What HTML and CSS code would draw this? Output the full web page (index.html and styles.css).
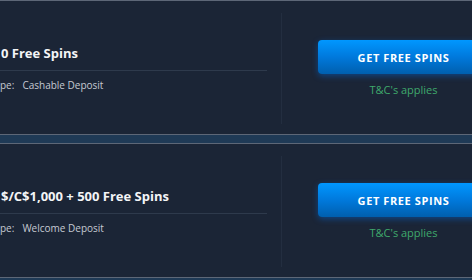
FILE: index.html
```html
<!DOCTYPE html>
<html>
<head>
<meta charset="utf-8">
<link rel="stylesheet" href="styles.css">
</head>
<body>
<div class="list">
  <div class="card">
    <div class="info">
      <div class="title">0 Free Spins</div>
      <div class="rule"></div>
      <div class="type"><span class="label">pe:</span><span class="value">Cashable Deposit</span></div>
    </div>
    <div class="vdiv"></div>
    <div class="cta">
      <a class="btn">GET FREE SPINS</a>
      <div class="tc">T&amp;C's applies</div>
    </div>
  </div>
  <div class="card">
    <div class="info">
      <div class="title">$/C$1,000 + 500 Free Spins</div>
      <div class="rule"></div>
      <div class="type"><span class="label">pe:</span><span class="value">Welcome Deposit</span></div>
    </div>
    <div class="vdiv"></div>
    <div class="cta">
      <a class="btn">GET FREE SPINS</a>
      <div class="tc">T&amp;C's applies</div>
    </div>
  </div>
</div>
</body>
</html>
```

FILE: styles.css
```css
html, body {
  margin: 0;
  padding: 0;
  background: #1f3a56;
  overflow: hidden;
  font-family: "Open Sans", "DejaVu Sans", sans-serif;
}
.list {
  display: flex;
  flex-direction: column;
  gap: 8px;
  margin: 0 -40px 0 -20px;
}
.card {
  box-sizing: border-box;
  height: 135px;
  background: #1b2536;
  border: 1px solid #5d6777;
  border-radius: 4px;
  display: flex;
  align-items: center;
  padding: 12px 0 10px 19px;
}
.info {
  width: 267px;
  flex: 0 0 267px;
  display: flex;
  flex-direction: column;
}
.title {
  color: #f4f5f7;
  font-weight: 700;
  font-size: 13px;
  line-height: 16px;
  margin-left: 1px;
}
.rule {
  height: 1px;
  background: #2e3a4c;
  margin: 9px 0 8px;
}
.type {
  color: #c6cad3;
  font-size: 10px;
  line-height: 13px;
  display: flex;
  gap: 8px;
}
.vdiv {
  align-self: stretch;
  width: 1px;
  background: #232e40;
  margin-left: 14px;
}
.cta {
  margin-left: 36px;
  width: 171px;
  display: flex;
  flex-direction: column;
  align-items: center;
}
.btn {
  box-sizing: border-box;
  width: 171px;
  height: 34px;
  border-radius: 4px;
  background: linear-gradient(to bottom, #0097ff 0%, #0079dc 50%, #005fae 100%);
  box-shadow: 0 2px 6px rgba(0, 110, 230, 0.45);
  color: #ffffff;
  font-weight: 700;
  font-size: 11px;
  letter-spacing: 0.6px;
  display: flex;
  align-items: center;
  justify-content: center;
}
.tc {
  margin-top: 9px;
  color: #3fa96c;
  font-size: 11px;
  line-height: 14px;
}
```
